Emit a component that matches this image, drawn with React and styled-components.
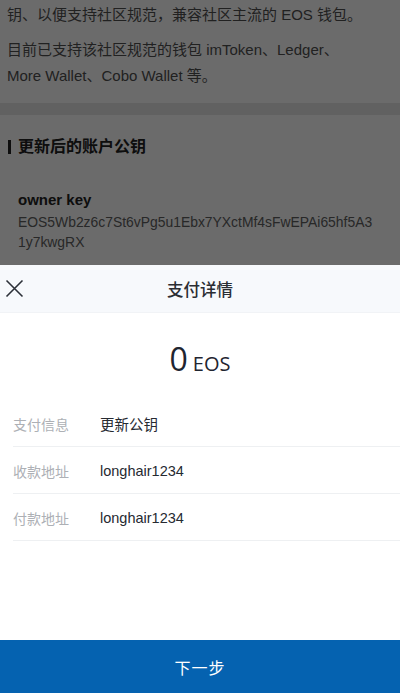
import React from "react";
import styled, { createGlobalStyle } from "styled-components";

const Global = createGlobalStyle`
  html, body { margin: 0; padding: 0; }
  body {
    font-family: "Liberation Sans", "Noto Sans CJK SC", sans-serif;
    background: #fff;
    -webkit-font-smoothing: antialiased;
  }
  * { box-sizing: border-box; }
`;

const Screen = styled.div`
  position: relative;
  width: 400px;
  height: 695px;
  overflow: hidden;
  background: #fff;
`;

const Card = styled.section`
  background: #fff;
  padding: ${(p) => p.$pad || "0 7px"};
`;

const Para = styled.p`
  margin: ${(p) => p.$mt || "0"} 0 0;
  font-size: 15px;
  line-height: 26px;
  color: #505050;
`;

const Band = styled.div`
  height: 12px;
  background: #e6e6e6;
`;

const SectionTitle = styled.h3`
  margin: 0;
  display: flex;
  align-items: center;
  gap: 7px;
  font-size: 16px;
  line-height: 24px;
  font-weight: 700;
  color: #222;
  &::before {
    content: "";
    width: 3px;
    height: 14px;
    background: #222;
  }
`;

const KeyBlock = styled.div`
  padding: 30px 10px 0 10px;
`;

const KeyName = styled.div`
  font-size: 15px;
  line-height: 22px;
  font-weight: 700;
  color: #222;
`;

const KeyValue = styled.div`
  margin-top: 1px;
  font-size: 13.9px;
  line-height: 20px;
  color: #606060;
  word-break: break-all;
  width: 358px;
`;

const Overlay = styled.div`
  position: absolute;
  inset: 0;
  background: rgba(0, 0, 0, 0.58);
`;

const Sheet = styled.div`
  position: absolute;
  left: 0;
  right: 0;
  bottom: 0;
  height: 430px;
  background: #fff;
  display: flex;
  flex-direction: column;
  padding-bottom: 2px;
`;

const Header = styled.div`
  position: relative;
  height: 48px;
  flex: none;
  background: #f7f9fc;
  border-bottom: 1px solid #f1f3f6;
  display: flex;
  align-items: center;
  justify-content: center;
`;

const Title = styled.div`
  font-size: 16.5px;
  font-weight: 500;
  color: #2a2d33;
  font-family: "Noto Sans CJK SC", sans-serif;
`;

const Close = styled.button`
  position: absolute;
  left: 4px;
  top: 50%;
  transform: translateY(-50%);
  width: 20px;
  height: 20px;
  padding: 0;
  border: 0;
  background: transparent;
  display: flex;
  align-items: center;
  justify-content: center;
`;

const Amount = styled.div`
  height: 87px;
  flex: none;
  display: flex;
  align-items: baseline;
  justify-content: center;
  gap: 5px;
  padding-top: 28px;
  color: #1f2530;
`;

const Big = styled.span`
  font-size: 32px;
  line-height: 36px;
  font-family: "Open Sans", "Liberation Sans", sans-serif;
  font-weight: 400;
`;

const Unit = styled.span`
  font-size: 20px;
  font-family: "Open Sans", "Liberation Sans", sans-serif;
`;

const Rows = styled.div`
  padding-left: 13px;
  flex: none;
`;

const Row = styled.div`
  height: 47px;
  display: flex;
  align-items: center;
  border-bottom: 1px solid #eef0f2;
  padding-top: 1px;
`;

const Label = styled.div`
  width: 87px;
  font-size: 14px;
  color: #adb0b5;
`;

const Value = styled.div`
  font-size: 14.5px;
  color: #262a31;
`;

const Spacer = styled.div`
  flex: 1;
`;

const Primary = styled.button`
  height: 53px;
  flex: none;
  width: 100%;
  border: 0;
  background: #0562b0;
  color: #fff;
  font-family: "Noto Sans CJK SC", sans-serif;
  font-size: 16px;
  letter-spacing: 1px;
`;

export default function App() {
  return (
    <>
      <Global />
      <Screen>
        <Card>
          <Para $mt="2px">钥、以便支持社区规范，兼容社区主流的 EOS 钱包。</Para>
          <Para $mt="9px">
            目前已支持该社区规范的钱包 imToken、Ledger、
            <br />
            More Wallet、Cobo Wallet 等。
          </Para>
          <div style={{ height: 14 }} />
        </Card>
        <Band />
        <Card $pad="20px 8px 20px">
          <SectionTitle>更新后的账户公钥</SectionTitle>
          <KeyBlock>
            <KeyName>owner key</KeyName>
            <KeyValue>EOS5Wb2z6c7St6vPg5u1Ebx7YXctMf4sFwEPAi65hf5A31y7kwgRX</KeyValue>
          </KeyBlock>
        </Card>
        <Overlay />
        <Sheet>
          <Header>
            <Close aria-label="close">
              <svg width="19" height="19" viewBox="0 0 19 19">
                <path d="M1.5 1.5 L17.5 17.5 M17.5 1.5 L1.5 17.5" stroke="#2c3038" strokeWidth="1.6" fill="none" />
              </svg>
            </Close>
            <Title>支付详情</Title>
          </Header>
          <Amount>
            <Big>0</Big>
            <Unit>EOS</Unit>
          </Amount>
          <Rows>
            <Row>
              <Label>支付信息</Label>
              <Value>更新公钥</Value>
            </Row>
            <Row>
              <Label>收款地址</Label>
              <Value>longhair1234</Value>
            </Row>
            <Row>
              <Label>付款地址</Label>
              <Value>longhair1234</Value>
            </Row>
          </Rows>
          <Spacer />
          <Primary>下一步</Primary>
        </Sheet>
      </Screen>
    </>
  );
}
